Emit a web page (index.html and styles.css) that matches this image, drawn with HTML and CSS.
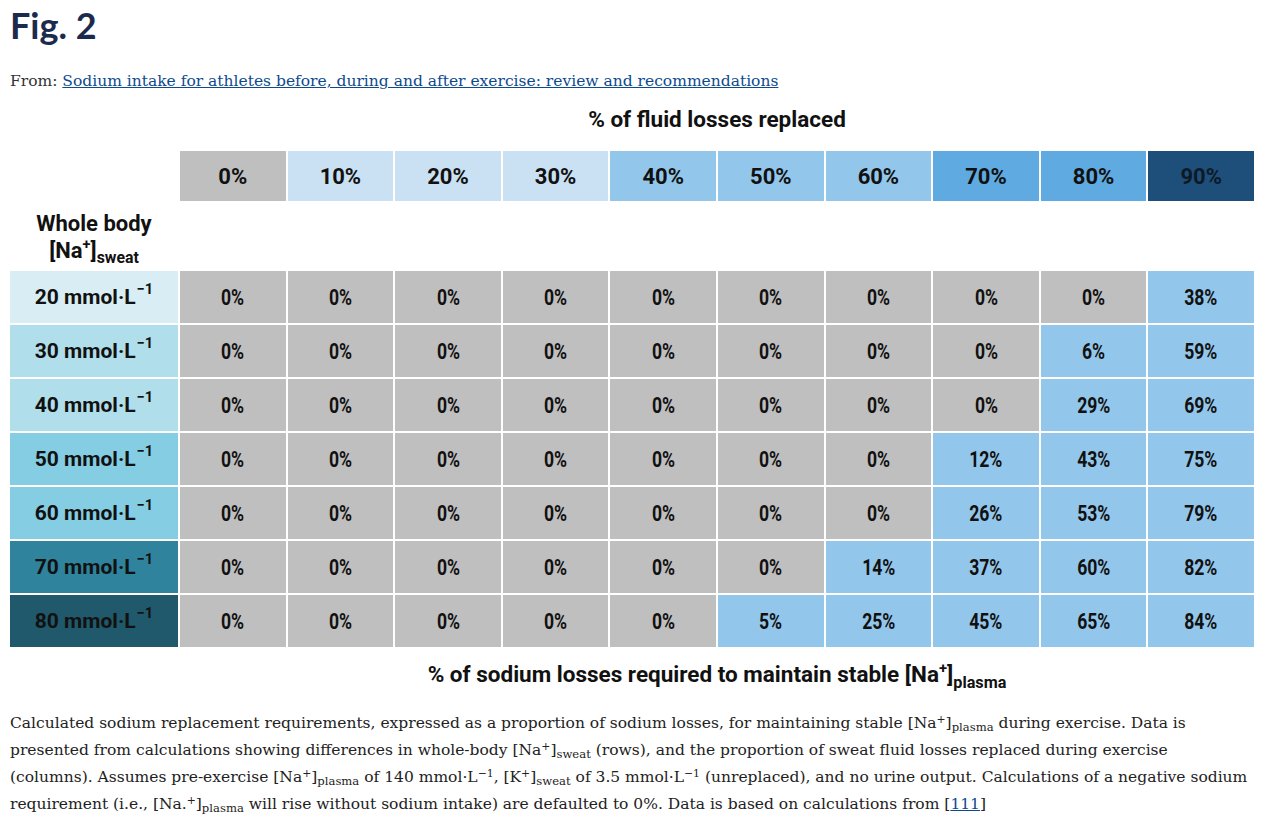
FILE: index.html
```html
<!DOCTYPE html>
<html lang="en">
<head>
<meta charset="utf-8">
<title>Fig. 2</title>
<link rel="stylesheet" href="styles.css">
</head>
<body>
<main class="page">
  <h1 class="fig-title">Fig. 2</h1>
  <p class="from">From: <a href="#" class="link">Sodium intake for athletes before, during and after exercise: review and recommendations</a></p>

  <section class="figure">
    <div class="axis-top">% of fluid losses replaced</div>
    <div class="grid">
      <div class="corner"></div>
      <div class="cell hdr c-grey">0%</div>
      <div class="cell hdr c-pale">10%</div>
      <div class="cell hdr c-pale">20%</div>
      <div class="cell hdr c-pale">30%</div>
      <div class="cell hdr c-blue">40%</div>
      <div class="cell hdr c-blue">50%</div>
      <div class="cell hdr c-blue">60%</div>
      <div class="cell hdr c-mid">70%</div>
      <div class="cell hdr c-mid">80%</div>
      <div class="cell hdr c-dark">90%</div>

      <div class="row-title">Whole body<br><span class="na">[Na<sup>+</sup>]<sub>sweat</sub></span></div>
      <div class="spacer"></div>

      <div class="cell lbl l20">20 mmol·L<sup>−1</sup></div>
      <div class="cell c-grey"><span class="v">0%</span></div><div class="cell c-grey"><span class="v">0%</span></div><div class="cell c-grey"><span class="v">0%</span></div><div class="cell c-grey"><span class="v">0%</span></div><div class="cell c-grey"><span class="v">0%</span></div><div class="cell c-grey"><span class="v">0%</span></div><div class="cell c-grey"><span class="v">0%</span></div><div class="cell c-grey"><span class="v">0%</span></div><div class="cell c-grey"><span class="v">0%</span></div><div class="cell c-blue"><span class="v">38%</span></div>

      <div class="cell lbl l30">30 mmol·L<sup>−1</sup></div>
      <div class="cell c-grey"><span class="v">0%</span></div><div class="cell c-grey"><span class="v">0%</span></div><div class="cell c-grey"><span class="v">0%</span></div><div class="cell c-grey"><span class="v">0%</span></div><div class="cell c-grey"><span class="v">0%</span></div><div class="cell c-grey"><span class="v">0%</span></div><div class="cell c-grey"><span class="v">0%</span></div><div class="cell c-grey"><span class="v">0%</span></div><div class="cell c-blue"><span class="v">6%</span></div><div class="cell c-blue"><span class="v">59%</span></div>

      <div class="cell lbl l30">40 mmol·L<sup>−1</sup></div>
      <div class="cell c-grey"><span class="v">0%</span></div><div class="cell c-grey"><span class="v">0%</span></div><div class="cell c-grey"><span class="v">0%</span></div><div class="cell c-grey"><span class="v">0%</span></div><div class="cell c-grey"><span class="v">0%</span></div><div class="cell c-grey"><span class="v">0%</span></div><div class="cell c-grey"><span class="v">0%</span></div><div class="cell c-grey"><span class="v">0%</span></div><div class="cell c-blue"><span class="v">29%</span></div><div class="cell c-blue"><span class="v">69%</span></div>

      <div class="cell lbl l50">50 mmol·L<sup>−1</sup></div>
      <div class="cell c-grey"><span class="v">0%</span></div><div class="cell c-grey"><span class="v">0%</span></div><div class="cell c-grey"><span class="v">0%</span></div><div class="cell c-grey"><span class="v">0%</span></div><div class="cell c-grey"><span class="v">0%</span></div><div class="cell c-grey"><span class="v">0%</span></div><div class="cell c-grey"><span class="v">0%</span></div><div class="cell c-blue"><span class="v">12%</span></div><div class="cell c-blue"><span class="v">43%</span></div><div class="cell c-blue"><span class="v">75%</span></div>

      <div class="cell lbl l50">60 mmol·L<sup>−1</sup></div>
      <div class="cell c-grey"><span class="v">0%</span></div><div class="cell c-grey"><span class="v">0%</span></div><div class="cell c-grey"><span class="v">0%</span></div><div class="cell c-grey"><span class="v">0%</span></div><div class="cell c-grey"><span class="v">0%</span></div><div class="cell c-grey"><span class="v">0%</span></div><div class="cell c-grey"><span class="v">0%</span></div><div class="cell c-blue"><span class="v">26%</span></div><div class="cell c-blue"><span class="v">53%</span></div><div class="cell c-blue"><span class="v">79%</span></div>

      <div class="cell lbl l70">70 mmol·L<sup>−1</sup></div>
      <div class="cell c-grey"><span class="v">0%</span></div><div class="cell c-grey"><span class="v">0%</span></div><div class="cell c-grey"><span class="v">0%</span></div><div class="cell c-grey"><span class="v">0%</span></div><div class="cell c-grey"><span class="v">0%</span></div><div class="cell c-grey"><span class="v">0%</span></div><div class="cell c-blue"><span class="v">14%</span></div><div class="cell c-blue"><span class="v">37%</span></div><div class="cell c-blue"><span class="v">60%</span></div><div class="cell c-blue"><span class="v">82%</span></div>

      <div class="cell lbl l80">80 mmol·L<sup>−1</sup></div>
      <div class="cell c-grey"><span class="v">0%</span></div><div class="cell c-grey"><span class="v">0%</span></div><div class="cell c-grey"><span class="v">0%</span></div><div class="cell c-grey"><span class="v">0%</span></div><div class="cell c-grey"><span class="v">0%</span></div><div class="cell c-blue"><span class="v">5%</span></div><div class="cell c-blue"><span class="v">25%</span></div><div class="cell c-blue"><span class="v">45%</span></div><div class="cell c-blue"><span class="v">65%</span></div><div class="cell c-blue"><span class="v">84%</span></div>
    </div>
    <div class="axis-bottom">% of sodium losses required to maintain stable [Na<sup>+</sup>]<sub>plasma</sub></div>
  </section>

  <p class="caption">Calculated sodium replacement requirements, expressed as a proportion of sodium losses, for maintaining stable [Na<sup>+</sup>]<sub>plasma</sub> during exercise. Data is presented from calculations showing differences in whole-body [Na<sup>+</sup>]<sub>sweat</sub> (rows), and the proportion of sweat fluid losses replaced during exercise (columns). Assumes pre-exercise [Na<sup>+</sup>]<sub>plasma</sub> of 140 mmol·L<sup>−1</sup>, [K<sup>+</sup>]<sub>sweat</sub> of 3.5 mmol·L<sup>−1</sup> (unreplaced), and no urine output. Calculations of a negative sodium requirement (i.e., [Na.<sup>+</sup>]<sub>plasma</sub> will rise without sodium intake) are defaulted to 0%. Data is based on calculations from [<a href="#" class="link">111</a>]</p>
</main>
</body>
</html>
```

FILE: styles.css
```css
html, body {
  margin: 0;
  padding: 0;
  background: #ffffff;
}

.page {
  padding: 0 10px;
  width: 1253px;
}

.fig-title {
  margin: 3px 0 0 0;
  font-family: Lato, "Open Sans", sans-serif;
  font-weight: 700;
  font-size: 36px;
  line-height: 44px;
  color: #1c2b4d;
}

.from {
  margin: 22px 0 0 0;
  font-family: "DejaVu Serif", "Liberation Serif", serif;
  font-size: 15.5px;
  line-height: 24px;
  color: #333333;
}

.link {
  color: #0d4a8e;
  text-decoration: underline;
}

.figure {
  width: 1244px;
  font-family: Roboto, "Liberation Sans", sans-serif;
  font-weight: 700;
  color: #111111;
}

.axis-top {
  margin: 11px 0 0 170px;
  text-align: center;
  font-size: 22.5px;
  line-height: 30px;
  height: 30px;
}

.grid {
  margin-top: 17px;
  display: grid;
  grid-template-columns: 168px repeat(10, 1fr);
  grid-template-rows: 50px 66px repeat(7, 52px);
  gap: 2px;
}

.cell {
  display: flex;
  align-items: center;
  justify-content: center;
  font-size: 21px;
}

.hdr {
  font-size: 22px;
}

.v {
  display: inline-block;
  font-size: 22px;
  transform: scaleX(0.8);
}

.lbl sup {
  font-size: 0.7em;
  position: relative;
  top: -0.55em;
  line-height: 0;
  vertical-align: baseline;
  margin-left: 1px;
}

.axis-bottom sup, .row-title sup {
  font-size: 0.66em;
  vertical-align: 0.6em;
  line-height: 0;
}

.row-title {
  grid-column: 1;
  text-align: center;
  font-size: 22px;
  line-height: 27px;
  padding-top: 7px;
}

.row-title sub {
  font-size: 0.72em;
  vertical-align: -0.3em;
  line-height: 0;
}

.spacer {
  grid-column: 2 / span 10;
}

.c-grey { background: #bfbfbf; }
.c-pale { background: #c9e1f3; }
.c-blue { background: #93c6eb; }
.c-mid { background: #5eaae1; }
.c-dark { background: #1e4f7b; color: #0d1a26; }

.lbl { justify-content: center; }
.l20 { background: #d8edf4; }
.l30 { background: #b0deea; }
.l50 { background: #84cde3; }
.l70 { background: #2f839c; }
.l80 { background: #1f596b; }

.axis-bottom {
  margin: 12px 0 0 170px;
  text-align: center;
  font-size: 22.5px;
  line-height: 30px;
}

.axis-bottom sub {
  font-size: 0.72em;
  vertical-align: -0.35em;
  line-height: 0;
}

.caption {
  margin: 21px 0 0 0;
  width: 1245px;
  font-family: "DejaVu Serif", "Liberation Serif", serif;
  font-size: 15.5px;
  line-height: 27px;
  color: #222222;
}

.caption sup {
  font-size: 0.7em;
  vertical-align: 0.45em;
  line-height: 0;
}

.caption sub {
  font-size: 0.75em;
  vertical-align: -0.3em;
  line-height: 0;
}
```
